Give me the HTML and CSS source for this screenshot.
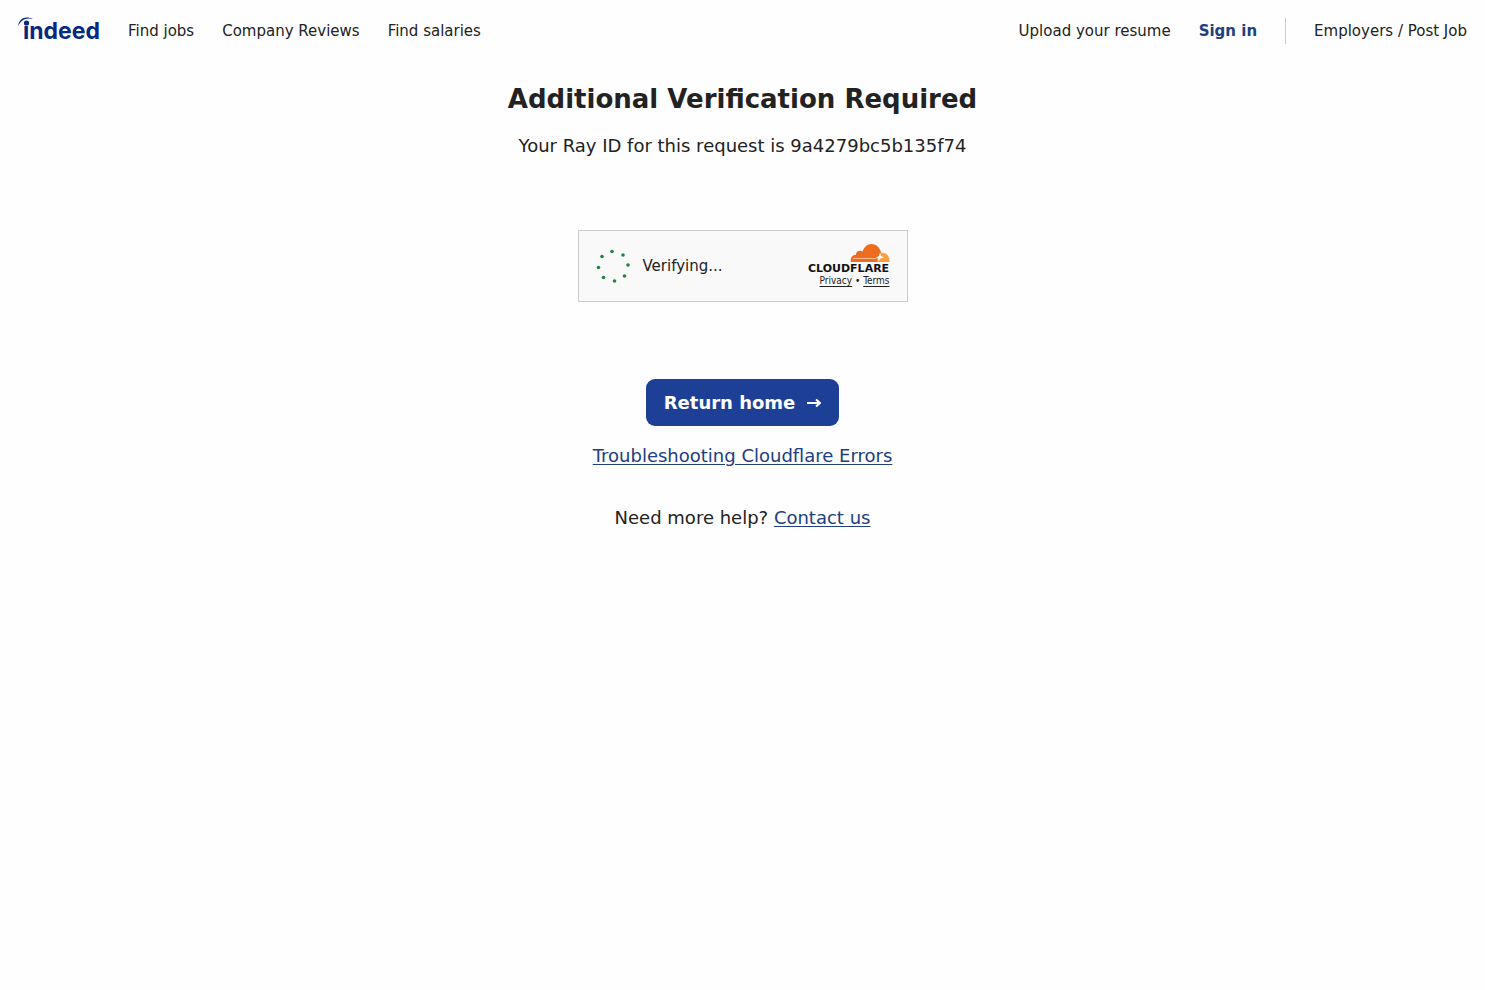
FILE: index.html
```
<!DOCTYPE html>
<html lang="en">
<head>
    <meta charset="UTF-8">
    <meta name="viewport" content="width=device-width, initial-scale=1.0">
    <title>Additional Verification Required</title>
    <link rel="stylesheet" href="styles.css">
</head>
<body>
    <header>
        <nav class="nav-left">
            <a class="logo" href="#" aria-label="Indeed home">
                <svg width="82" height="26" viewBox="0 0 82 26">
                    <path d="M0 8.500C1 0 8-2.500 15 1C8-1 2.500 2 0 8.500Z"/>
                    <text x="5" y="21">ındeed</text>
                    <circle cx="8.500" cy="5" r="2.600"/>
                </svg>
            </a>
            <a href="#">Find jobs</a>
            <a href="#">Company Reviews</a>
            <a href="#">Find salaries</a>
        </nav>
        <nav class="nav-right">
            <a href="#">Upload your resume</a>
            <a class="sign-in" href="#">Sign in</a>
            <a class="employers" href="#">Employers / Post Job</a>
        </nav>
    </header>

    <main>
        <h1>Additional Verification Required</h1>
        <p class="ray">Your Ray ID for this request is 9a4279bc5b135f74</p>

        <div class="widget">
            <svg class="spinner" width="34" height="34" viewBox="0 0 34 34">
                <circle cx="16" cy="2.500" r="1.800"/>
                <circle cx="27" cy="6" r="1.800"/>
                <circle cx="32" cy="16" r="1.800"/>
                <circle cx="28.500" cy="27" r="1.800"/>
                <circle cx="18.500" cy="32" r="1.800"/>
                <circle cx="7.500" cy="28.500" r="1.800"/>
                <circle cx="2.500" cy="18.500" r="1.800"/>
                <circle cx="6" cy="7.500" r="1.800"/>
            </svg>
            <span class="verifying">Verifying...</span>
            <div class="brand">
                <svg width="82" height="30" viewBox="0 0 82 30" role="img" aria-label="Cloudflare">
                    <path class="cloud" d="M43 18C42 14 44 11 48 11C47.500 7.500 51.500 5.500 54.500 7.500C56 3 59.500 0 63.500 0C68.500 0 72 4 73 8.500L70 18Z"/>
                    <path class="cloud-light" d="M72.500 9C77.500 8 82 11.500 81.500 18H68.500L70 14Z"/>
                    <path class="cloud-line" d="M45 14.500H67Q69 14.500 70 13.500"/>
                    <path class="spark" d="M68 13.500L71 12L72 8.500L73 12L76 13.500L72.500 14.500L70 17L70.500 14.500Z"/>
                    <text x="0" y="28">CLOUDFLARE</text>
                </svg>
                <div class="terms"><a href="#">Privacy</a> • <a href="#">Terms</a></div>
            </div>
        </div>

        <button class="return" type="button">Return home
            <svg width="14" height="12" viewBox="0 0 14 12"><path d="M0 6H13M9 2.500L13 6L9 9.500"/></svg>
        </button>
        <p><a href="#">Troubleshooting Cloudflare Errors</a></p>
        <p class="help">Need more help? <a href="#">Contact us</a></p>
    </main>
</body>
</html>
```
FILE: styles.css
```
body {
    margin: 0;
    background: #fefefe;
    color: #222;
    font-family: "DejaVu Sans", sans-serif;
    font-size: 18px;
    line-height: 26px;
}
header {
    display: flex;
    justify-content: space-between;
    padding: 18px;
    font-size: 15px;
}
nav {
    display: flex;
    align-items: center;
    gap: 28px;
}
nav a {
    color: #222;
    text-decoration: none;
}
.logo svg {
    display: block;
    fill: #06297f;
    overflow: visible;
}
.logo text {
    font: bold 23px Inter, sans-serif;
}
nav .sign-in {
    color: #204080;
    font-weight: bold;
}
.employers {
    border-left: 1px solid #ccc;
    padding-left: 28px;
}
main {
    display: flex;
    flex-direction: column;
    align-items: center;
    padding: 20px 18px;
    text-align: center;
}
h1 {
    margin: 0 0 17px;
    font-size: 26px;
    line-height: 34px;
}
p {
    margin: 0;
}
main a {
    color: #204080;
    text-underline-offset: 2px;
}
.widget {
    display: flex;
    align-items: center;
    box-sizing: border-box;
    width: 330px;
    height: 72px;
    margin: 71px 0 77px;
    padding: 0 17px;
    border: 1px solid #ccc;
    background: #f9f9f9;
}
.spinner {
    fill: #22823e;
}
.verifying {
    margin-left: 13px;
    font-size: 15px;
}
.brand {
    margin-left: auto;
}
.brand svg {
    display: block;
}
.brand text {
    font: bold 11px "DejaVu Sans", sans-serif;
    fill: #111;
}
.cloud {
    fill: #ee6c1e;
}
.cloud-light {
    fill: #f9a140;
}
.cloud-line {
    fill: none;
    stroke: #f9b78e;
}
.spark {
    fill: #fff;
}
.terms {
    font-family: "DejaVu Sans Condensed", "DejaVu Sans", sans-serif;
    font-size: 10px;
    line-height: 14px;
    text-align: right;
}
.terms a {
    color: #222;
}
.return {
    display: flex;
    align-items: center;
    gap: 12px;
    margin: 0 0 17px;
    padding: 10px 18px;
    border: 0;
    border-radius: 9px;
    background: #1d4096;
    color: #fff;
    font: bold 18px/27px "DejaVu Sans", sans-serif;
    cursor: pointer;
}
.return svg {
    fill: none;
    stroke: #fff;
    stroke-width: 2;
}
.help {
    margin-top: 36px;
}
```
